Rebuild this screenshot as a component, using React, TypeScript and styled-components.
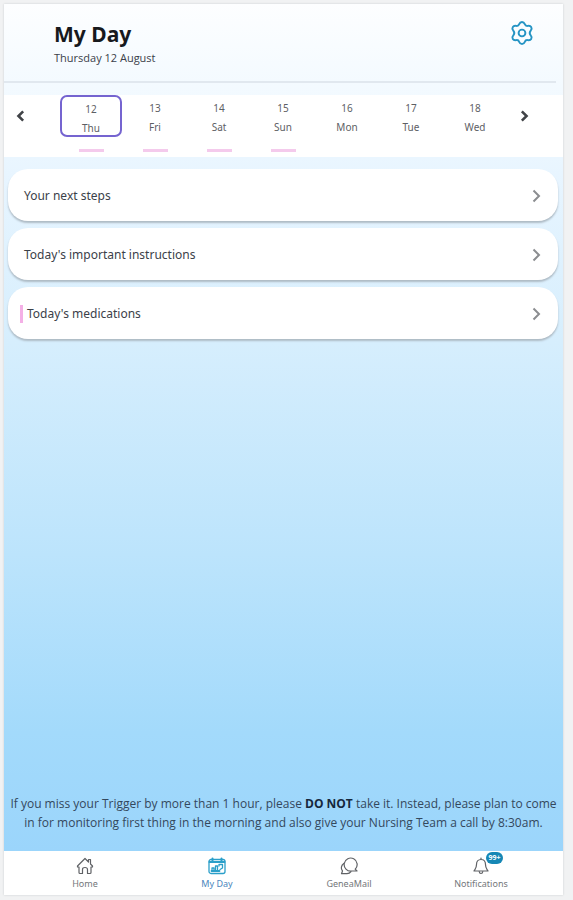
import React from 'react';
import styled, { createGlobalStyle } from 'styled-components';

const GlobalStyle = createGlobalStyle`
  * { box-sizing: border-box; }
  body {
    margin: 0;
    background: #f1f2f3;
    font-family: 'Noto Sans', 'Open Sans', sans-serif;
    color: #3b4149;
  }
  button { font: inherit; color: inherit; border: 0; padding: 0; background: none; cursor: pointer; }
  h1, p { margin: 0; }
  svg { display: block; }
`;

const Page = styled.div`
  min-height: 100vh;
  padding: 4px 10px 5px 4px;
  display: flex;
`;

const AppFrame = styled.div`
  flex: 1;
  min-width: 0;
  display: flex;
  flex-direction: column;
  background: #fff;
  box-shadow: 0 0 2px #c9cdd0;
`;

const Content = styled.main`
  flex: 1;
  display: flex;
  flex-direction: column;
  background: linear-gradient(#fdfeff 0%, #f1f9ff 12%, #e8f5ff 20%, #d6eefd 40%, #bce4fc 65%, #a3dafb 86%, #9bd5fb 100%);
`;

const Header = styled.header`
  display: flex;
  justify-content: space-between;
  align-items: flex-start;
  height: 79px;
  margin-right: 7px;
  padding: 15px 22px 0 50px;
  border-bottom: 2px solid #e1e8ef;
`;

const Title = styled.h1`
  font-size: 21px;
  line-height: 30px;
  font-weight: 700;
  color: #17191d;
`;

const DateLine = styled.p`
  font-family: 'Open Sans', 'Noto Sans', sans-serif;
  font-size: 11px;
  line-height: 18px;
`;

const SettingsButton = styled.button`
  margin-top: 2px;
  color: #2594c4;
`;

const DayStrip = styled.nav`
  display: grid;
  grid-template-columns: 55px repeat(7, 1fr) 56px;
  height: 62px;
  margin-top: 12px;
  background: #fff;
`;

const PagerButton = styled.button`
  display: grid;
  place-items: center;
  width: 34px;
  height: 42px;
  color: #404347;
`;

const DayCell = styled.div`
  display: flex;
  flex-direction: column;
  align-items: center;
  padding: 0 1px;
`;

const DayButton = styled.button<{ $selected: boolean }>`
  display: flex;
  flex-direction: column;
  align-items: center;
  width: 100%;
  height: 42px;
  padding-top: ${(p) => (p.$selected ? '3px' : '2px')};
  border: 2px solid ${(p) => (p.$selected ? '#7564d0' : 'transparent')};
  border-radius: 7px;
  font-size: 10px;
  line-height: 19px;
  color: #5d6064;
`;

const DayMark = styled.span<{ $on: boolean }>`
  width: 25px;
  height: 3px;
  margin-top: 12px;
  background: ${(p) => (p.$on ? '#f4caec' : 'transparent')};
`;

const CardList = styled.div`
  display: flex;
  flex-direction: column;
  gap: 7px;
  padding: 12px 5px 0 4px;
`;

const Card = styled.button`
  display: flex;
  align-items: center;
  justify-content: space-between;
  height: 52px;
  padding: 2px 15px 0 12px;
  border-radius: 20px;
  background: #fff;
  box-shadow: 0 2px 2px #aebbc5;
  font-size: 12px;
  line-height: 18px;
  text-align: left;
`;

const CardTitle = styled.span<{ $marked: boolean }>`
  padding-left: 4px;
  border-left: ${(p) => (p.$marked ? '3px solid #f4b0e6' : '0 solid transparent')};
`;

const CardArrow = styled.span`
  color: #8b8d90;
`;

const Notice = styled.p`
  margin-top: auto;
  padding: 0 4px 19px;
  text-align: center;
  font-family: 'Open Sans', 'Noto Sans', sans-serif;
  font-size: 12px;
  line-height: 19px;
  color: #34485d;

  strong { color: #16283c; }
`;

const TabBar = styled.nav`
  display: grid;
  grid-template-columns: repeat(4, 1fr);
  height: 44px;
  padding: 0 16px 0 15px;
  background: #fff;
`;

const Tab = styled.button<{ $active: boolean }>`
  display: flex;
  flex-direction: column;
  align-items: center;
  padding-top: 6px;
  font-size: 9px;
  line-height: 14px;
  color: ${(p) => (p.$active ? '#4a86bd' : '#74777b')};
`;

const TabIcon = styled.span<{ $active: boolean }>`
  position: relative;
  margin-bottom: 2px;
  color: ${(p) => (p.$active ? '#2b9fc9' : '#606266')};
`;

const Badge = styled.span`
  position: absolute;
  left: 14px;
  top: -5px;
  width: 17px;
  height: 12px;
  border-radius: 6px;
  background: #1687b5;
  color: #fff;
  font-size: 7px;
  line-height: 12px;
  font-weight: 700;
  text-align: center;
`;

const iconProps = {
  fill: 'none',
  stroke: 'currentColor',
  strokeLinecap: 'round' as const,
  strokeLinejoin: 'round' as const,
  'aria-hidden': true,
};

const GearIcon = () => (
  <svg width="24" height="24" viewBox="0 0 24 24" strokeWidth="1.9" {...iconProps}>
    <path d="M9.2 3.1C9.8 1.6 10.6 1 12 1s2.200.6 2.800 2.100c.5 1.400 1.600 2 3 1.800 1.700-.3 2.700 0 3.400 1.200.8 1.300.6 2.300-.5 3.500-1.100 1.300-1.100 3.500 0 4.800 1.100 1.200 1.300 2.200.5 3.500-.7 1.200-1.700 1.500-3.400 1.200-1.400-.2-2.500.4-3 1.800C14.200 22.400 13.400 23 12 23s-2.200-.6-2.800-2.100c-.5-1.400-1.600-2-3-1.800-1.700.3-2.700 0-3.400-1.200-.8-1.300-.6-2.300.5-3.500 1.100-1.300 1.100-3.500 0-4.800C2.200 8.400 2 7.400 2.800 6.100 3.500 4.900 4.500 4.600 6.200 4.900c1.400.2 2.500-.4 3-1.800Z" />
    <circle cx="12" cy="12" r="3.400" />
  </svg>
);

const Chevron = ({ back = false, size = 12, weight = 2 }: { back?: boolean; size?: number; weight?: number }) => (
  <svg width={size} height={size} viewBox="0 0 14 14" {...iconProps} strokeWidth={weight} strokeLinecap="butt" strokeLinejoin="miter">
    <path d={back ? 'M9.500 1.500 4 7l5.500 5.500' : 'M4.500 1.500 10 7l-5.500 5.500'} />
  </svg>
);

const HomeIcon = () => (
  <svg width="18" height="18" viewBox="0 0 18 18" strokeWidth="1.2" {...iconProps}>
    <path d="M1.500 9 9 1.500l3.500 3.500V2.500h2V7l2 2v1h-1.500v5.500q0 1-1 1h-2.500v-4q0-2-2.500-2t-2.500 2v4H4q-1 0-1-1V10H1.500Z" />
  </svg>
);

const CalendarIcon = () => (
  <svg width="18" height="18" viewBox="0 0 18 18" strokeWidth="1.3" {...iconProps}>
    <rect x="1" y="2.500" width="16" height="14" rx="2" />
    <path d="M1.500 5h15M4.500 1.500v3M13.500 1.500v3" strokeWidth="2" />
    <path d="M4 14v-3h2v3M7.500 14V9h2v5M11 9V7.500h3.500V11L12 12.500" />
    <path d="M3.500 14h8" strokeWidth="1.800" />
  </svg>
);

const ChatIcon = () => (
  <svg width="18" height="18" viewBox="0 0 18 18" strokeWidth="1.2" {...iconProps}>
    <path d="M15.200 12.200A6.500 6.500 0 1 0 11.500 14H17Z" />
    <path d="M3.800 6.500C1 8.500.6 11.800 2.500 14L1.500 16.700H7q2.500 0 4-2" />
  </svg>
);

const BellIcon = () => (
  <svg width="18" height="18" viewBox="0 0 18 18" strokeWidth="1.2" {...iconProps}>
    <path d="M9 1v1.500M9 2.500c-3 0-4.500 2.200-4.500 5 0 4-1.500 4.500-2.500 6.500h14c-1-2-2.500-2.500-2.500-6.500 0-2.800-1.500-5-4.500-5Z" />
    <path d="M7.200 14.500q.2 2 1.800 2t1.800-2" />
  </svg>
);

const days = [
  { date: 12, name: 'Thu', marked: true },
  { date: 13, name: 'Fri', marked: true },
  { date: 14, name: 'Sat', marked: true },
  { date: 15, name: 'Sun', marked: true },
  { date: 16, name: 'Mon', marked: false },
  { date: 17, name: 'Tue', marked: false },
  { date: 18, name: 'Wed', marked: false },
];

const cards = [
  { title: 'Your next steps', marked: false },
  { title: "Today's important instructions", marked: false },
  { title: "Today's medications", marked: true },
];

const tabs = [
  { label: 'Home', Icon: HomeIcon },
  { label: 'My Day', Icon: CalendarIcon, active: true },
  { label: 'GeneaMail', Icon: ChatIcon },
  { label: 'Notifications', Icon: BellIcon, badge: '99+' },
];

export default function App() {
  return (
    <>
      <GlobalStyle />
      <Page>
        <AppFrame>
          <Content>
            <Header>
              <div>
                <Title>My Day</Title>
                <DateLine>Thursday 12 August</DateLine>
              </div>
              <SettingsButton type="button" aria-label="Settings">
                <GearIcon />
              </SettingsButton>
            </Header>
            <DayStrip aria-label="Days">
              <PagerButton type="button" aria-label="Previous days">
                <Chevron back weight={3} />
              </PagerButton>
              {days.map((day, i) => (
                <DayCell key={day.date}>
                  <DayButton type="button" $selected={i === 0} aria-pressed={i === 0}>
                    <span>{day.date}</span>
                    <span>{day.name}</span>
                  </DayButton>
                  <DayMark $on={day.marked} />
                </DayCell>
              ))}
              <PagerButton type="button" aria-label="Next days">
                <Chevron weight={3} />
              </PagerButton>
            </DayStrip>
            <CardList>
              {cards.map((card) => (
                <Card type="button" key={card.title}>
                  <CardTitle $marked={card.marked}>{card.title}</CardTitle>
                  <CardArrow>
                    <Chevron size={14} />
                  </CardArrow>
                </Card>
              ))}
            </CardList>
            <Notice>
              If you miss your Trigger by more than 1 hour, please <strong>DO NOT</strong> take it. Instead, please
              plan to come in for monitoring first thing in the morning and also give your Nursing Team a call by
              8:30am.
            </Notice>
          </Content>
          <TabBar aria-label="Main">
            {tabs.map(({ label, Icon, active = false, badge }) => (
              <Tab type="button" key={label} $active={active} aria-current={active ? 'page' : undefined}>
                <TabIcon $active={active}>
                  <Icon />
                  {badge && <Badge>{badge}</Badge>}
                </TabIcon>
                {label}
              </Tab>
            ))}
          </TabBar>
        </AppFrame>
      </Page>
    </>
  );
}
